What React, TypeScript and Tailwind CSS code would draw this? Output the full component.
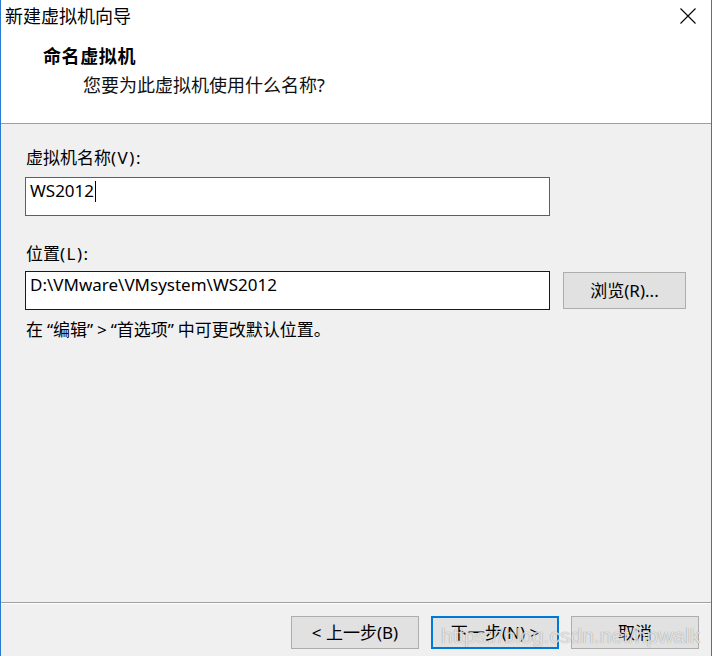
const font = "font-['Noto_Sans','Noto_Sans_CJK_SC',sans-serif]";

function WizardButton({ label, primary }: { label: string; primary?: boolean }) {
  return (
    <div
      className={
        'flex h-[33px] w-[128px] items-center justify-center bg-[#e1e1e1] text-[17px] text-black ' +
        (primary ? 'border-2 border-[#0078d7]' : 'border border-[#adadad]')
      }
    >
      {label}
    </div>
  );
}

// chinese-style quote marks take a wider cell than the latin glyph
function Quote({ open }: { open?: boolean }) {
  return (
    <span className={'inline-block w-[10px] ' + (open ? 'text-right' : 'text-left')}>
      {open ? '“' : '”'}
    </span>
  );
}

export default function App() {
  return (
    <div className={`relative h-[656px] w-[713px] bg-white ${font}`}>
      <div className="flex h-[656px] w-[712px] flex-col border-x border-[#2b79d0] bg-[#f0f0f0]">
        {/* header */}
        <div className="relative h-[123px] shrink-0 bg-white">
          <div className="pl-[4px] text-[18px] leading-[32px] text-black">新建虚拟机向导</div>
          <svg className="absolute left-[679px] top-[8px]" width="16" height="16" viewBox="0 0 16 16">
            <path d="M0.5 0.5 L15.5 15.5 M15.5 0.5 L0.5 15.5" stroke="#000" strokeWidth="1.1" fill="none" />
          </svg>
          <div className="mt-[12px] pl-[42px] text-[18px] font-bold leading-[24px] tracking-[0.6px] text-black">
            命名虚拟机
          </div>
          <div className="mt-[5px] pl-[82px] text-[18px] leading-[24px] text-[#111]">
            您要为此虚拟机使用什么名称?
          </div>
        </div>
        <div className="h-px shrink-0 bg-[#a0a0a0]" />

        {/* body */}
        <div className="flex-1 pl-[24px] pt-[22px] text-black">
          <div className="pl-[1px] text-[17px] leading-[24px]">
            虚拟机名称<span className="tracking-[1.5px]">(V):</span>
          </div>
          <div className="mt-[7px] flex h-[39px] w-[525px] items-start border border-[#0078d7] bg-white pl-[4px] pt-[1px]">
            <span className="text-[17px] leading-[24px]">WS2012</span>
            <span className="ml-[1px] mt-[2px] h-[21px] w-px bg-black" />
          </div>

          <div className="mt-[26px] pl-[1px] text-[17px] leading-[24px]">
            位置<span className="tracking-[1.5px]">(L):</span>
          </div>
          <div className="mt-[5px] flex items-start gap-[13px]">
            <div className="h-[39px] w-[525px] border border-[#1a1a1a] bg-white pl-[4px] pt-[1px]">
              <span className="text-[17px] leading-[24px]">D:\VMware\VMsystem\WS2012</span>
            </div>
            <div className="mt-px flex h-[37px] w-[123px] items-center justify-center border border-[#adadad] bg-[#e1e1e1] text-[17px]">
              浏览(R)...
            </div>
          </div>
          <div className="mt-[8px] pl-[1px] text-[17px] leading-[24px]">
            在<Quote open />编辑<Quote />&gt;<Quote open />首选项<Quote />中可更改默认位置。
          </div>
        </div>

        {/* footer */}
        <div className="h-px shrink-0 bg-[#a0a0a0]" />
        <div className="h-px shrink-0 bg-white" />
        <div className="flex h-[52px] shrink-0 justify-end gap-[12px] pr-[12px] pt-[12px]">
          <WizardButton label="< 上一步(B)" />
          <WizardButton label="下一步(N) >" primary />
          <WizardButton label="取消" />
        </div>
      </div>

      {/* watermark */}
      <div className="pointer-events-none absolute left-[441px] top-[624px] font-['Liberation_Sans',sans-serif] text-[21px] leading-[24px] text-white/75 [text-shadow:0_0_1px_rgba(0,0,0,0.45)]">
        https://blog.csdn.net/hpwalk
      </div>
    </div>
  );
}
